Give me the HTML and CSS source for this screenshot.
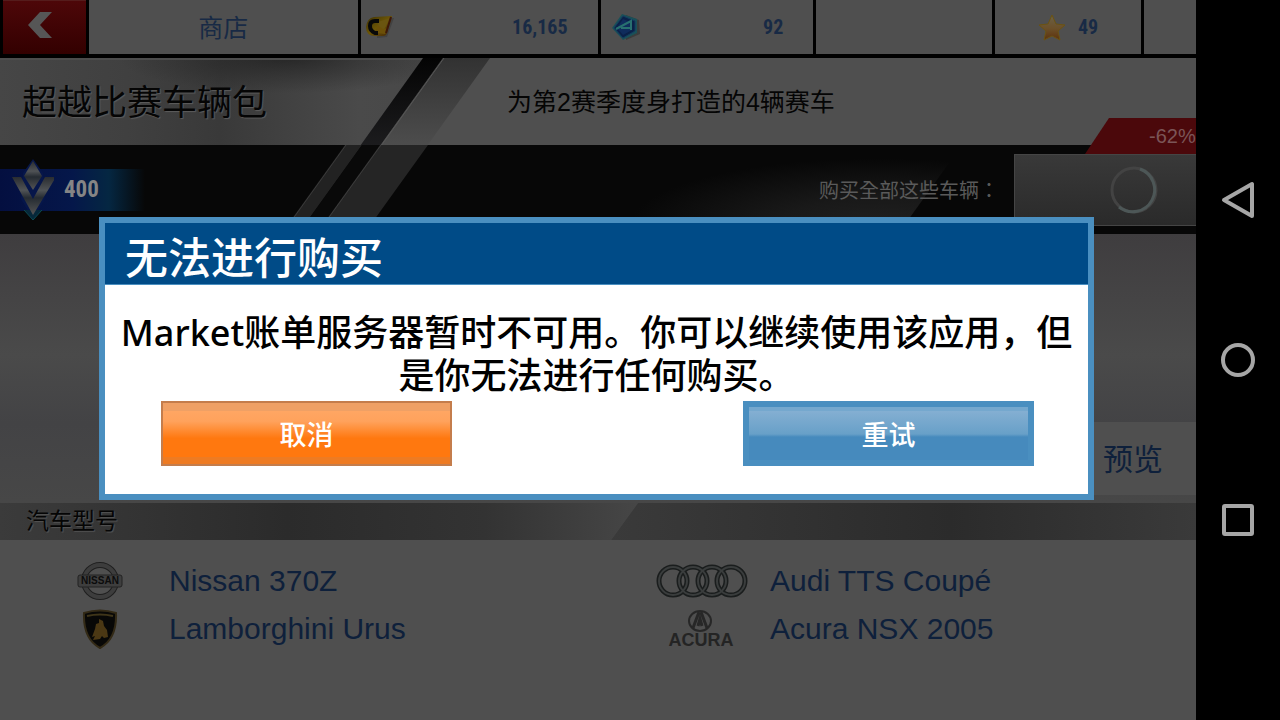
FILE: index.html
```html
<!DOCTYPE html>
<html lang="zh-CN">
<head>
  <meta charset="UTF-8">
  <meta name="viewport" content="width=device-width, initial-scale=1.0">
  <title>商店</title>
  <link rel="stylesheet" href="styles.css">
</head>
<body>

  <main class="game">
    <header class="topbar">
      <button class="back" aria-label="返回">
        <svg width="26" height="28" viewBox="0 0 26 28"><path d="M13 1h12L13 14l12 13H13L1 14z" fill="#565656"/></svg>
      </button>
      <div class="cell shop">商店</div>
      <div class="cell credits">
        <svg width="30" height="24" viewBox="0 0 30 24">
          <defs>
            <linearGradient id="gold" x1="0" y1="0" x2="1" y2="1">
              <stop offset="0" stop-color="#3c3005"/><stop offset=".5" stop-color="#6b5506"/><stop offset="1" stop-color="#452507"/>
            </linearGradient>
          </defs>
          <path d="M12 4l17-1-7 19-10 1z" fill="#424242"/>
          <path d="M9 2l18-1-5 17q-1 3-4 3h-8Q1 21 1 12 2 3 9 2z" fill="url(#gold)"/>
          <path d="M13 7L25 3l-5 10q-2 4-6 3z" fill="#6a5510"/>
          <path d="M12 10l6 4 5-1-3 6-8-1z" fill="#6c5008"/>
          <path d="M26 2l-5 16" stroke="#3e1808" stroke-width="2"/>
          <path d="M14 6h-4q-5 0-5 5t5 7h3" fill="none" stroke="#080808" stroke-width="4"/>
        </svg>
        <span class="num">16,165</span>
      </div>
      <div class="cell tokens">
        <svg width="30" height="28" viewBox="0 0 30 28">
          <path d="M15 2l13 5 1 14-14 6z" fill="#3c3c3c"/>
          <path d="M11 1l15 5v14l-14 7L1 15z" fill="#195058"/>
          <path d="M12 3l12 5v10l-12 7-9-10z" fill="#0b2148" stroke="#123b60"/>
          <path d="M12 6l9 4v7l-9 5-6-7z" fill="#0f2c5c"/>
          <path d="M5 16L20 8v9M10 15h9" fill="none" stroke="#28706f" stroke-width="2"/>
        </svg>
        <span class="num">92</span>
      </div>
      <div class="cell"></div>
      <div class="cell stars">
        <svg width="28" height="27" viewBox="0 0 28 27">
          <defs>
            <linearGradient id="star" x1="0" y1="0" x2="0" y2="1">
              <stop offset="0" stop-color="#6b6147"/><stop offset=".55" stop-color="#6b4f28"/><stop offset="1" stop-color="#5c310c"/>
            </linearGradient>
          </defs>
          <path d="M14 1l4 9 9 1-7 6 2 9-8-4-8 4 2-9-7-6 9-1z" fill="url(#star)" stroke="#6a5212"/>
        </svg>
        <span class="num">49</span>
      </div>
      <div class="cell"></div>
    </header>

    <section class="banner">
      <svg class="stripes" viewBox="0 0 1196 176" preserveAspectRatio="none" aria-hidden="true">
        <defs>
          <linearGradient id="metal" x1="0" y1="0" x2="1" y2="0">
            <stop offset="0" stop-color="#464646"/><stop offset=".3" stop-color="#404040"/><stop offset=".52" stop-color="#393939"/><stop offset=".85" stop-color="#4a4a4a"/><stop offset="1" stop-color="#484848"/>
          </linearGradient>
          <radialGradient id="fade" cx=".68" cy="0" r=".4">
            <stop offset="0" stop-color="#1c1c1c" stop-opacity=".7"/><stop offset="1" stop-color="#222" stop-opacity="0"/>
          </radialGradient>
          <linearGradient id="shine" x1="0" y1="0" x2="0" y2="1">
            <stop offset="0" stop-color="#323232"/><stop offset="1" stop-color="#4d4d4d"/>
          </linearGradient>
          <linearGradient id="slit" x1="0" y1="0" x2="0" y2="1">
            <stop offset="0" stop-color="#040404"/><stop offset="1" stop-color="#1c1c1e"/>
          </linearGradient>
          <radialGradient id="glow" cx=".75" cy=".9" r=".75">
            <stop offset="0" stop-color="#202020"/><stop offset=".4" stop-color="#191919"/><stop offset="1" stop-color="#070707"/>
          </radialGradient>
        </defs>
        <rect width="1196" height="176" fill="#4f4f4f"/>
        <path d="M0 0h423L360 88H0z" fill="url(#metal)"/>
        <path d="M0 0h423L360 88H0z" fill="url(#fade)"/>
        <path d="M0 1h423" stroke="#4c4c4c" stroke-width="2"/>
        <path d="M423 0h20L380 88h-20z" fill="url(#slit)"/>
        <path d="M443 0h47L427 88h-47z" fill="url(#shine)"/>
        <path d="M444 0L381 88" stroke="#575757"/>
        <rect y="87" width="1196" height="89" fill="#070707"/>
        <path d="M345 87h17L298 176h-17z" fill="#222"/>
        <path d="M346 87L282 176" stroke="#3a3a3a"/>
        <path d="M362 87h18L316 176h-18z" fill="#090909"/>
        <path d="M380 87h48L364 176h-48z" fill="#252525"/>
        <path d="M381 87L317 176" stroke="#3c3c3c"/>
        <path d="M630 87h332L898 176H630z" fill="url(#glow)"/>
      </svg>
      <div class="headline">
        <h1>超越比赛车辆包</h1>
        <p>为第2赛季度身打造的4辆赛车</p>
      </div>
      <div class="offer">
        <div class="level">
          <svg width="54" height="64" viewBox="0 0 54 64">
            <defs>
              <linearGradient id="steel" x1="0" y1="0" x2="0" y2="1">
                <stop offset="0" stop-color="#292c30"/><stop offset=".35" stop-color="#505356"/><stop offset=".55" stop-color="#252b32"/><stop offset="1" stop-color="#555"/>
              </linearGradient>
            </defs>
            <path d="M33 1l10 14 2 26-12 20-12-20 2-26z" fill="#06164a"/>
            <path d="M24 52l9 10 9-10" fill="#06283a" stroke="#0b4a52"/>
            <path d="M33 3l9 15-9 14-9-14z" fill="url(#steel)"/>
            <path d="M12 19h9l12 22 12-22h11L33 57z" fill="url(#steel)"/>
          </svg>
          <span>400</span>
        </div>
        <p class="offer-label" lang="zh-TW">购买全部这些车辆：</p>
        <div class="price">
          <span class="discount">-62%</span>
          <button class="price-button" aria-label="购买">
            <svg width="52" height="52" viewBox="0 0 52 52">
              <circle cx="26" cy="26" r="22" fill="none" stroke="#434343" stroke-width="3"/>
              <path d="M32 5A22 22 0 1 1 11 43" fill="none" stroke="#4d5757" stroke-width="3"/>
            </svg>
          </button>
        </div>
      </div>
    </section>

    <section class="stage">
      <button class="preview">预览</button>
    </section>

    <h2 class="models-title">
      <svg viewBox="0 0 1196 38" preserveAspectRatio="none" aria-hidden="true">
        <defs>
          <linearGradient id="bar" x1="0" y1="0" x2="1" y2="0">
            <stop offset="0" stop-color="#3b3b3b"/><stop offset=".45" stop-color="#2b2b2b"/><stop offset=".76" stop-color="#333"/><stop offset="1" stop-color="#464646"/>
          </linearGradient>
          <linearGradient id="bar2" x1="0" y1="0" x2="1" y2="0">
            <stop offset="0" stop-color="#3a3a3a"/><stop offset=".58" stop-color="#2b2b2b"/><stop offset="1" stop-color="#3a3a3a"/>
          </linearGradient>
        </defs>
        <path d="M0 0h638l-27 38H0z" fill="url(#bar)"/>
        <path d="M638 0h558v38H611z" fill="url(#bar2)"/>
      </svg>
      <span>汽车型号</span>
    </h2>

    <ul class="models">
      <li>
        <span class="logo">
          <svg width="46" height="40" viewBox="0 0 46 40">
            <circle cx="23" cy="20" r="16" fill="none" stroke="#1f1f1f" stroke-width="6"/>
            <circle cx="23" cy="20" r="16" fill="none" stroke="#3d3d3d" stroke-width="4"/>
            <rect x="1" y="14" width="44" height="12" rx="2" fill="#3e3e3e" stroke="#222"/>
            <text x="23" y="23" text-anchor="middle" class="nissan">NISSAN</text>
          </svg>
        </span>
        Nissan 370Z
      </li>
      <li>
        <span class="logo">
          <svg width="94" height="36" viewBox="0 0 94 36">
            <g fill="none" stroke="#1a1d1d" stroke-width="5">
              <circle cx="19" cy="18" r="14"/><circle cx="39" cy="18" r="14"/><circle cx="58" cy="18" r="14"/><circle cx="77" cy="18" r="14"/>
            </g>
            <g fill="none" stroke="#3a3d3d" stroke-width="2">
              <circle cx="19" cy="18" r="14"/><circle cx="39" cy="18" r="14"/><circle cx="58" cy="18" r="14"/><circle cx="77" cy="18" r="14"/>
            </g>
          </svg>
        </span>
        Audi TTS Coupé
      </li>
      <li>
        <span class="logo">
          <svg width="36" height="40" viewBox="0 0 36 40">
            <path d="M2 4q16-5 32 0 1 26-16 35Q1 30 2 4z" fill="#080807" stroke="#332a16" stroke-width="2"/>
            <path d="M5 7q13-3 26 0" fill="none" stroke="#3f3519" stroke-width="2"/>
            <path d="M17 10l4 2 1 5 3 4 1 7-4 1-2-2-2 3-7 1 2-4-3 1 3-8 1-5 3-1z" fill="#4b3814"/>
          </svg>
        </span>
        Lamborghini Urus
      </li>
      <li>
        <span class="logo">
          <svg width="68" height="40" viewBox="0 0 68 40">
            <ellipse cx="33" cy="12" rx="11" ry="10" fill="none" stroke="#272727" stroke-width="2"/>
            <path d="M32 3L26 19M34 3l6 16M31 17l2-7 2 7" fill="none" stroke="#272727" stroke-width="3"/>
            <text x="34" y="37" text-anchor="middle" class="acura">ACURA</text>
          </svg>
        </span>
        Acura NSX 2005
      </li>
    </ul>

    <div class="overlay">
      <div class="dialog" role="alertdialog" aria-labelledby="dialog-title" aria-describedby="dialog-text">
        <h2 id="dialog-title">无法进行购买</h2>
        <div class="dialog-body">
          <p id="dialog-text">Market账单服务器暂时不可用。你可以继续使用该应用，但是你无法进行任何购买。</p>
          <div class="dialog-buttons">
            <button class="cancel">取消</button>
            <button class="retry">重试</button>
          </div>
        </div>
      </div>
    </div>
  </main>

  <nav class="navbar">
    <button aria-label="后退">
      <svg width="36" height="40" viewBox="0 0 36 40"><path d="M32 4v32L4 20z" fill="none" stroke="#a6a6a6" stroke-width="4" stroke-linejoin="round"/></svg>
    </button>
    <button aria-label="主屏幕">
      <svg width="36" height="36" viewBox="0 0 36 36"><circle cx="18" cy="18" r="15" fill="none" stroke="#a6a6a6" stroke-width="4"/></svg>
    </button>
    <button aria-label="最近任务">
      <svg width="36" height="36" viewBox="0 0 36 36"><rect x="4" y="4" width="28" height="28" rx="1" fill="none" stroke="#a6a6a6" stroke-width="4"/></svg>
    </button>
  </nav>

</body>
</html>
```
FILE: styles.css
```css
* {
  box-sizing: border-box;
}

body {
  margin: 0;
  min-height: 100vh;
  display: flex;
  background: #000;
  overflow: hidden;
  font-family: "Liberation Sans", "Noto Sans CJK SC", sans-serif;
}

h1, h2, p, ul {
  margin: 0;
  padding: 0;
  font-weight: normal;
}

button {
  border: none;
  padding: 0;
  font-family: inherit;
  cursor: pointer;
}

svg {
  display: block;
  flex-shrink: 0;
}

.game {
  flex: 1;
  min-width: 0;
  position: relative;
  display: flex;
  flex-direction: column;
  overflow: hidden;
  background: #4f4f4f;
}

/* top bar */

.topbar {
  display: grid;
  grid-template-columns: 83px 269fr 237fr 213fr 176fr 146fr 52fr;
  gap: 3px;
  height: 58px;
  padding: 0 0 4px 3px;
  background: #000;
}

.back {
  display: flex;
  justify-content: center;
  padding: 10px 10px 0 0;
  background: linear-gradient(#4d0709, #330000);
  border-top: 1px solid #551c1c;
}

.cell {
  display: flex;
  align-items: center;
  justify-content: space-between;
  background: #4f4f4f;
  color: #182a45;
}

.num {
  font-family: "Roboto Condensed", "Liberation Sans Narrow", "Liberation Sans", sans-serif;
  font-size: 20px;
  font-weight: bold;
}

.shop {
  justify-content: center;
  padding-bottom: 2px;
  font-size: 25px;
}

.credits {
  padding: 0 30px 0 4px;
}

.tokens {
  padding: 0 30px 0 10px;
}

.stars {
  justify-content: center;
  gap: 12px;
}

/* pack banner */

.banner {
  position: relative;
}

.stripes {
  position: absolute;
  width: 100%;
  height: 100%;
}

.headline {
  position: relative;
  display: grid;
  grid-template-columns: 485fr 689fr;
  align-items: center;
  height: 87px;
  padding: 0 0 4px 22px;
  color: #050505;
}

.headline h1 {
  font-size: 35px;
  text-shadow: 1px 1px 1px #5c5c5c;
}

.headline p {
  font-size: 25px;
}

.offer {
  position: relative;
  display: flex;
  align-items: center;
  height: 89px;
}

.level {
  display: flex;
  align-items: center;
  gap: 10px;
  width: 145px;
  height: 42px;
  background: linear-gradient(90deg, #040f40, #05174a 50%, #052742 75%, transparent);
  color: #858585;
  font-family: "Roboto Condensed", "Liberation Sans Narrow", "Liberation Sans", sans-serif;
  font-size: 23px;
  font-weight: bold;
}

.offer-label {
  margin-left: auto;
  color: #5a5a5a;
  font-family: "Noto Sans CJK TC", "Noto Sans CJK SC", sans-serif;
  font-size: 20px;
}

.price {
  position: relative;
  align-self: flex-start;
  width: 182px;
  margin: 9px 0 0 15px;
}

.price-button {
  display: flex;
  align-items: center;
  width: 100%;
  height: 72px;
  padding-left: 93px;
  background: linear-gradient(#393939, #2a2a2a);
  border: solid #454545;
  border-width: 1px 0 1px 1px;
}

.discount {
  position: absolute;
  right: 0;
  bottom: 100%;
  width: 111px;
  padding-left: 64px;
  background: #4b080b;
  clip-path: polygon(24px 0, 100% 0, 100% 100%, 0 100%);
  color: #7b5557;
  font-size: 20px;
  line-height: 36px;
  white-space: nowrap;
}

.stage {
  display: flex;
  justify-content: flex-end;
  align-items: flex-end;
  height: 269px;
  padding-bottom: 8px;
  background: linear-gradient(#3f3d3f, #4a4a4a 45%, #434345 70%, #474747);
}

.preview {
  width: 126px;
  height: 73px;
  padding-bottom: 4px;
  background: #4f4f4f;
  color: #0e203b;
  font-size: 30px;
}

/* car models */

.models-title {
  position: relative;
  height: 37px;
  padding-left: 26px;
  color: #050505;
  font-size: 23px;
  line-height: 37px;
  text-shadow: 1px 1px 1px #555;
}

.models-title svg {
  position: absolute;
  top: 0;
  left: 0;
  width: 100%;
  height: 100%;
}

.models-title span {
  position: relative;
}

.models {
  display: grid;
  grid-template-columns: 601fr 595fr;
  grid-auto-rows: 48px;
  padding-top: 17px;
  list-style: none;
  color: #0e203b;
  font-size: 30px;
}

.models li {
  display: flex;
  align-items: center;
  gap: 15px;
  padding-left: 46px;
}

.logo {
  display: flex;
  justify-content: center;
  width: 108px;
}

.nissan {
  font: bold 10px "Liberation Sans", sans-serif;
  fill: #0c0c0c;
}

.acura {
  font: bold 18px "Liberation Sans", sans-serif;
  fill: #242424;
}

/* purchase error dialog */

.overlay {
  position: absolute;
  inset: 0;
  display: flex;
  align-items: center;
  padding: 0 102px 3px 99px;
}

.dialog {
  flex: 1;
  border: 6px solid #4a8fc0;
  background: #fff;
  font-family: "Noto Sans", "Noto Sans CJK SC", sans-serif;
}

.dialog h2 {
  height: 62px;
  padding: 0 20px;
  border-bottom: 1px solid #4a8fc0;
  background: #004b87;
  color: #fff;
  font-size: 43px;
  font-weight: 500;
  line-height: 70px;
}

.dialog-body {
  padding: 26px 0 28px;
}

.dialog-body p {
  padding: 0 12px;
  color: #000;
  font-size: 36px;
  font-weight: 500;
  line-height: 43px;
  text-align: center;
}

.dialog-buttons {
  display: flex;
  justify-content: space-between;
  padding: 4px 54px 0 56px;
}

.dialog-buttons button {
  width: 291px;
  height: 65px;
  color: #fff;
  font-size: 27px;
  font-weight: 500;
}

.cancel {
  border: 2px solid #c47d4c;
  background: linear-gradient(#efa065 8px, #ffa663 8px, #ffa25c 30%, #ff780f 58%, #ff780f 54px, #ee7b22 54px);
}

.retry {
  border: 6px solid #4a8fc0;
  background: linear-gradient(#75a8ce 4px, #84afd2 4px, #68a0c8 27px, #468abd 30px);
}

/* system navigation */

.navbar {
  display: flex;
  flex-direction: column;
  justify-content: center;
  width: 84px;
  background: #000;
}

.navbar button {
  display: flex;
  align-items: center;
  justify-content: center;
  height: 160px;
  background: none;
}
```
